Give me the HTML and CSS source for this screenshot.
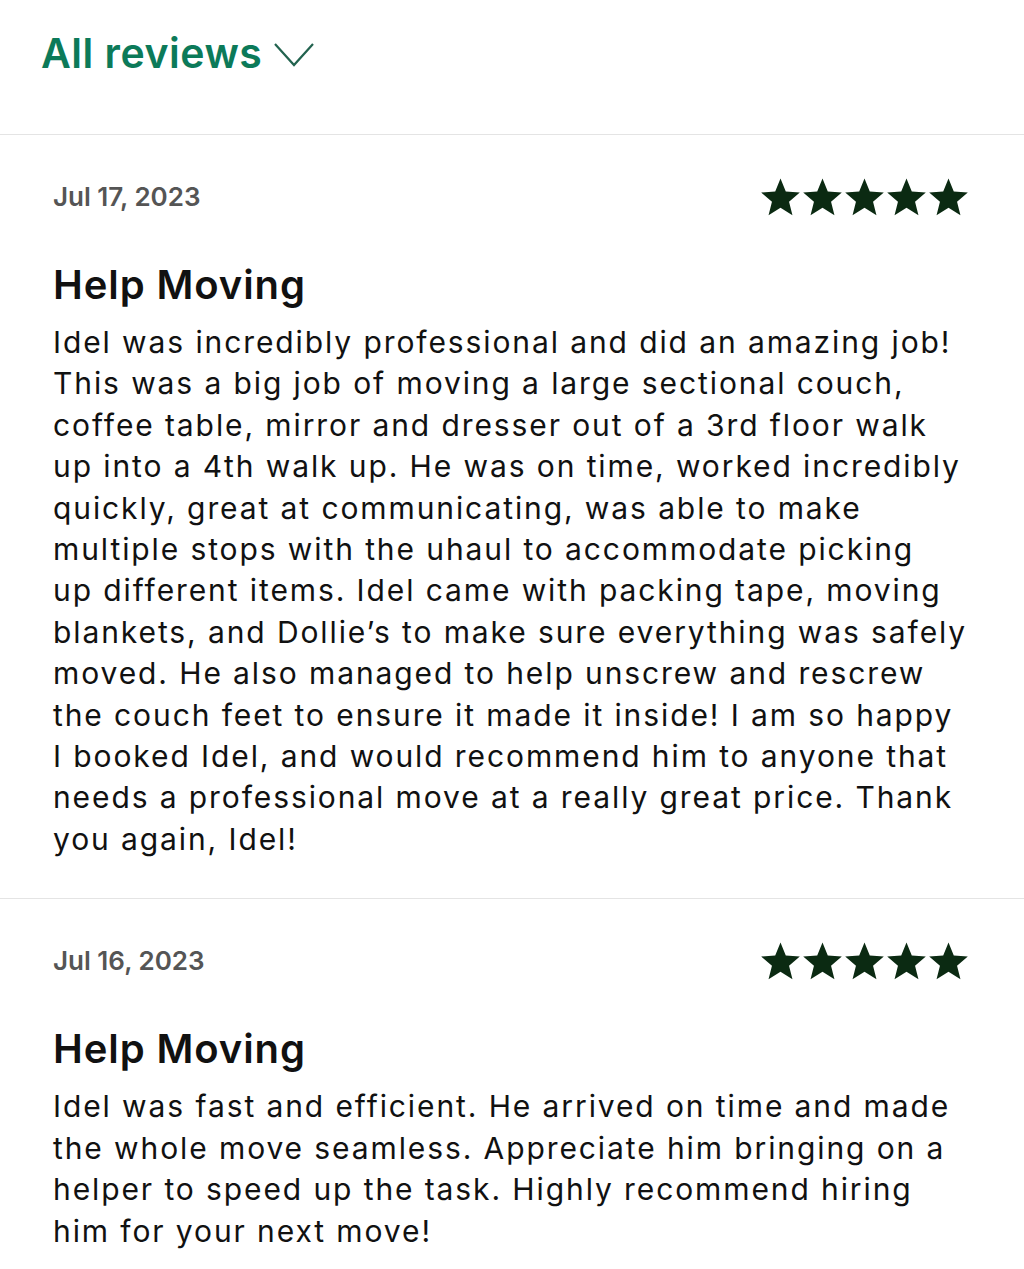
FILE: index.html
```html
<!DOCTYPE html>
<html lang="en">
<head>
<meta charset="utf-8">
<title>All reviews</title>
<link rel="stylesheet" href="styles.css">
</head>
<body>
<header class="header">
  <h1 class="header-title">All reviews</h1>
  <svg class="chevron" viewBox="0 0 40 24" width="40" height="24" aria-hidden="true"><path d="M1 1 L20 22 L39 1" fill="none" stroke="#22634f" stroke-width="2.2"/></svg>
</header>
<main>
  <article class="review">
    <div class="review-top">
      <span class="date">Jul 17, 2023</span>
      <span class="stars" aria-label="5 stars">
        <svg viewBox="0 0 24 24"><path d="M12 1.5l3.1 7.6 8.2.6-6.3 5.3 2 8-7-4.4-7 4.4 2-8L.7 9.7l8.2-.6z"/></svg>
        <svg viewBox="0 0 24 24"><path d="M12 1.5l3.1 7.6 8.2.6-6.3 5.3 2 8-7-4.4-7 4.4 2-8L.7 9.7l8.2-.6z"/></svg>
        <svg viewBox="0 0 24 24"><path d="M12 1.5l3.1 7.6 8.2.6-6.3 5.3 2 8-7-4.4-7 4.4 2-8L.7 9.7l8.2-.6z"/></svg>
        <svg viewBox="0 0 24 24"><path d="M12 1.5l3.1 7.6 8.2.6-6.3 5.3 2 8-7-4.4-7 4.4 2-8L.7 9.7l8.2-.6z"/></svg>
        <svg viewBox="0 0 24 24"><path d="M12 1.5l3.1 7.6 8.2.6-6.3 5.3 2 8-7-4.4-7 4.4 2-8L.7 9.7l8.2-.6z"/></svg>
      </span>
    </div>
    <h2 class="review-title">Help Moving</h2>
    <p class="review-body">Idel was incredibly professional and did an amazing job!<br>This was a big job of moving a large sectional couch,<br>coffee table, mirror and dresser out of a 3rd floor walk<br>up into a 4th walk up. He was on time, worked incredibly<br>quickly, great at communicating, was able to make<br>multiple stops with the uhaul to accommodate picking<br>up different items. Idel came with packing tape, moving<br>blankets, and Dollie’s to make sure everything was safely<br>moved. He also managed to help unscrew and rescrew<br>the couch feet to ensure it made it inside! I am so happy<br>I booked Idel, and would recommend him to anyone that<br>needs a professional move at a really great price. Thank<br>you again, Idel!</p>
  </article>
  <article class="review">
    <div class="review-top">
      <span class="date">Jul 16, 2023</span>
      <span class="stars" aria-label="5 stars">
        <svg viewBox="0 0 24 24"><path d="M12 1.5l3.1 7.6 8.2.6-6.3 5.3 2 8-7-4.4-7 4.4 2-8L.7 9.7l8.2-.6z"/></svg>
        <svg viewBox="0 0 24 24"><path d="M12 1.5l3.1 7.6 8.2.6-6.3 5.3 2 8-7-4.4-7 4.4 2-8L.7 9.7l8.2-.6z"/></svg>
        <svg viewBox="0 0 24 24"><path d="M12 1.5l3.1 7.6 8.2.6-6.3 5.3 2 8-7-4.4-7 4.4 2-8L.7 9.7l8.2-.6z"/></svg>
        <svg viewBox="0 0 24 24"><path d="M12 1.5l3.1 7.6 8.2.6-6.3 5.3 2 8-7-4.4-7 4.4 2-8L.7 9.7l8.2-.6z"/></svg>
        <svg viewBox="0 0 24 24"><path d="M12 1.5l3.1 7.6 8.2.6-6.3 5.3 2 8-7-4.4-7 4.4 2-8L.7 9.7l8.2-.6z"/></svg>
      </span>
    </div>
    <h2 class="review-title">Help Moving</h2>
    <p class="review-body">Idel was fast and efficient. He arrived on time and made<br>the whole move seamless. Appreciate him bringing on a<br>helper to speed up the task. Highly recommend hiring<br>him for your next move!</p>
  </article>
</main>
</body>
</html>
```
FILE: styles.css
```css
* { box-sizing: border-box; }
html, body { margin: 0; padding: 0; background: #fff; }
body {
  font-family: Inter, "Noto Sans", "Liberation Sans", sans-serif;
  color: #111;
  overflow: hidden;
}
.header {
  height: 135px;
  border-bottom: 1px solid #e4e4e4;
  display: flex;
  align-items: flex-start;
  padding: 27px 0 0 41px;
  gap: 12px;
}
.header-title {
  margin: 0;
  font-size: 41px;
  line-height: 52px;
  font-weight: 600;
  color: #0c7a59;
  letter-spacing: 0.5px;
}
.chevron { margin-top: 16px; }
.review {
  padding: 41px 55px 38px 53px;
  border-bottom: 1px solid #e4e4e4;
}
.review-top {
  display: flex;
  justify-content: space-between;
  align-items: center;
  height: 40px;
}
.date {
  font-size: 26px;
  font-weight: 600;
  color: #555;
}
.stars { display: flex; gap: 1px; }
.stars svg { width: 41px; height: 41px; fill: #0b2a12; }
.review-title {
  margin: 45px 0 0;
  font-size: 40px;
  line-height: 48px;
  font-weight: 600;
  color: #111;
  letter-spacing: 0.9px;
}
.review-body {
  margin: 13px 0 0;
  font-size: 30px;
  line-height: 41.4px;
  font-weight: 400;
  color: #111;
  letter-spacing: 1.9px;
}
```
